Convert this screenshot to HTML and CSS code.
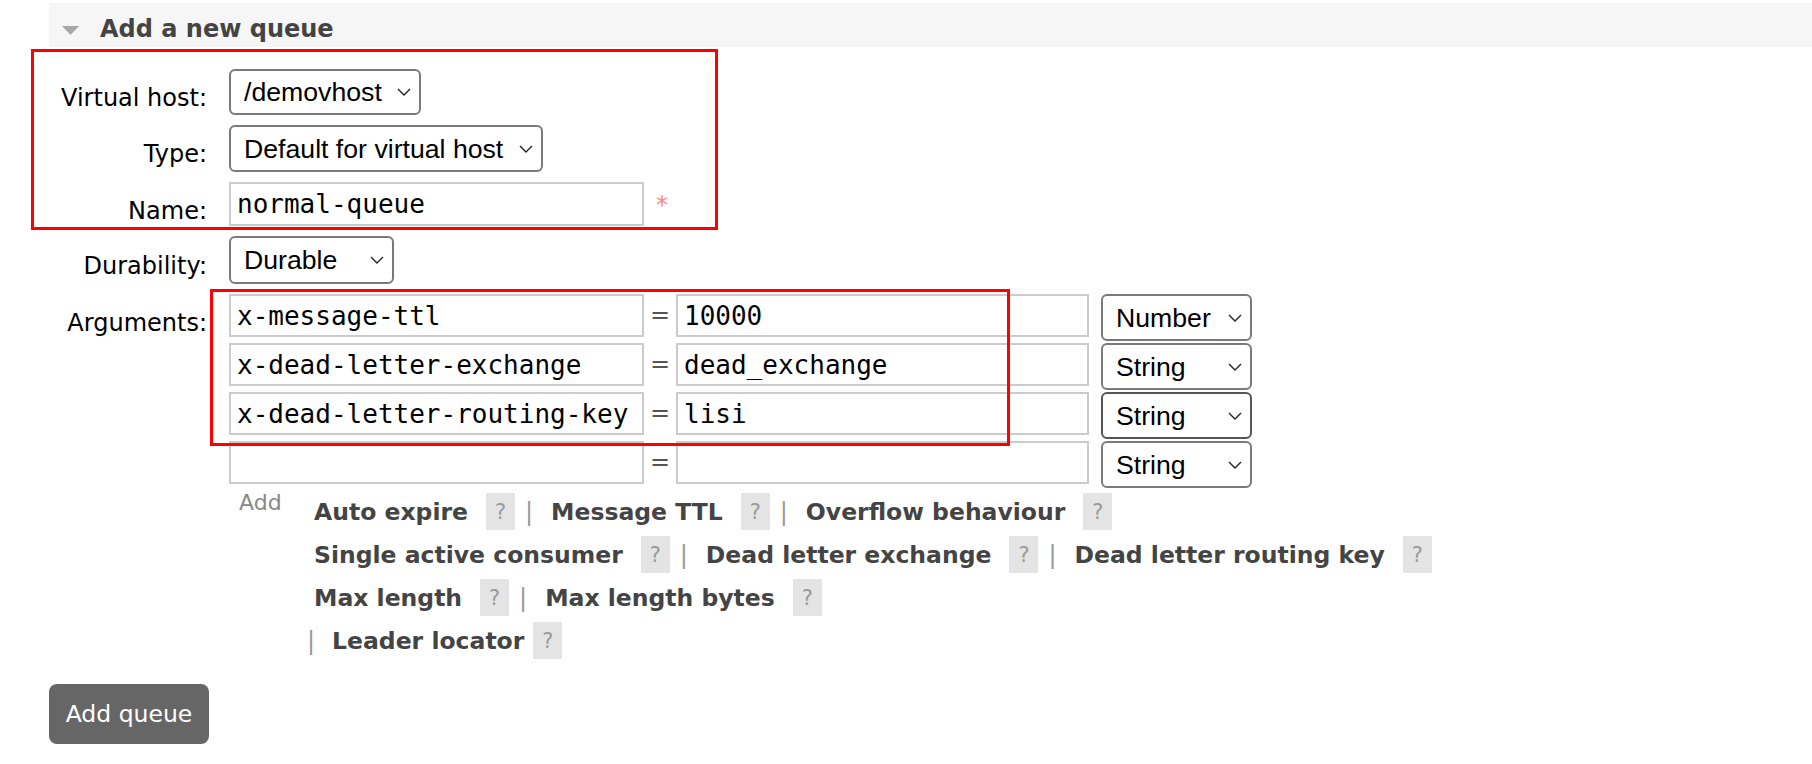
FILE: index.html
```html
<!DOCTYPE html>
<html lang="en">
<head>
<meta charset="utf-8">
<title>Add a new queue</title>
<link rel="stylesheet" href="styles.css">
</head>
<body>
<div class="page">
  <div class="section-head">
    <svg class="toggle" width="17" height="9" viewBox="0 0 17 9"><polygon points="0,0 17,0 8.5,9" fill="#a8a8a8"/></svg>
    <h2 class="section-title">Add a new queue</h2>
  </div>

  <form class="queue-form">
    <div class="field-grid">
      <label class="lbl">Virtual host:</label>
      <div class="ctl"><select class="sel sel-vhost"><option>/demovhost</option></select></div>

      <label class="lbl">Type:</label>
      <div class="ctl"><select class="sel sel-type"><option>Default for virtual host</option></select></div>

      <label class="lbl">Name:</label>
      <div class="ctl ctl-name"><input class="txt txt-name" type="text" value="normal-queue"><span class="req">*</span></div>

      <label class="lbl lbl-dur">Durability:</label>
      <div class="ctl"><select class="sel sel-dur"><option>Durable</option></select></div>

      <label class="lbl">Arguments:</label>
      <div class="ctl args">
        <div class="arg-list">
          <div class="arg-row"><input class="txt" type="text" value="x-message-ttl"><span class="eq">=</span><input class="txt val" type="text" value="10000"><select class="sel sel-argtype"><option>Number</option></select></div>
          <div class="arg-row"><input class="txt" type="text" value="x-dead-letter-exchange"><span class="eq">=</span><input class="txt val" type="text" value="dead_exchange"><select class="sel sel-argtype"><option>String</option></select></div>
          <div class="arg-row"><input class="txt" type="text" value="x-dead-letter-routing-key"><span class="eq">=</span><input class="txt val" type="text" value="lisi"><select class="sel sel-argtype sel-focus"><option>String</option></select></div>
          <div class="arg-row"><input class="txt" type="text" value=""><span class="eq">=</span><input class="txt val" type="text" value=""><select class="sel sel-argtype"><option>String</option></select></div>
        </div>
        <div class="arg-add">
          <span class="add-label">Add</span>
          <div class="arg-links">
            <div class="link-row">
              <span class="arg-link">Auto expire</span><span class="help">?</span><span class="sep">|</span>
              <span class="arg-link">Message TTL</span><span class="help">?</span><span class="sep">|</span>
              <span class="arg-link">Overflow behaviour</span><span class="help">?</span>
            </div>
            <div class="link-row">
              <span class="arg-link">Single active consumer</span><span class="help">?</span><span class="sep">|</span>
              <span class="arg-link">Dead letter exchange</span><span class="help">?</span><span class="sep">|</span>
              <span class="arg-link">Dead letter routing key</span><span class="help">?</span>
            </div>
            <div class="link-row">
              <span class="arg-link">Max length</span><span class="help">?</span><span class="sep">|</span>
              <span class="arg-link">Max length bytes</span><span class="help">?</span>
            </div>
            <div class="link-row link-row-last">
              <span class="sep">|</span><span class="arg-link">Leader locator</span><span class="help">?</span>
            </div>
          </div>
        </div>
      </div>
    </div>
    <button type="button" class="btn">Add queue</button>
  </form>

  <div class="annot annot-top"></div>
  <div class="annot annot-args"></div>
</div>
</body>
</html>
```

FILE: styles.css
```css
* { box-sizing: border-box; }

html, body {
  margin: 0;
  padding: 0;
  background: #fff;
}

body {
  font-family: "DejaVu Sans", Verdana, sans-serif;
  color: #000;
}

.page {
  position: relative;
  width: 1812px;
  min-height: 764px;
  padding-top: 3px;
}

/* section header */
.section-head {
  margin-left: 49px;
  height: 44px;
  background: #f6f6f6;
  display: flex;
  align-items: flex-start;
  padding: 12px 0 0 13px;
}

.toggle {
  display: block;
  margin-top: 11px;
}

.section-title {
  margin: 0 0 0 21px;
  font: bold 24px/28px "DejaVu Sans", Verdana, sans-serif;
  color: #444;
}

/* form */
.queue-form {
  margin-top: 22px;
}

.field-grid {
  display: grid;
  grid-template-columns: 207px max-content;
  column-gap: 22px;
  row-gap: 10px;
}

.lbl {
  text-align: right;
  font-size: 24px;
  line-height: 28px;
  padding-top: 15px;
  color: #000;
  white-space: nowrap;
}

.lbl-dur {
  padding-top: 16px;
}

.ctl {
  display: flex;
  align-items: flex-start;
}

.ctl-name {
  align-items: baseline;
}

.sel {
  -webkit-appearance: none;
  appearance: none;
  display: block;
  height: 47px;
  font: 26.67px "Liberation Sans", Arial, sans-serif;
  color: #000;
  border: 2px solid #7a7a7a;
  border-radius: 6px;
  background: #fff url("data:image/svg+xml;utf8,<svg xmlns='http://www.w3.org/2000/svg' width='14' height='8' viewBox='0 0 14 8'><path d='M1 1l6 6 6-6' fill='none' stroke='%23222' stroke-width='1.4'/></svg>") no-repeat right 8px center;
  padding: 0 30px 0 13px;
  margin: 0;
  outline: none;
}

.sel-vhost { width: 192px; height: 46px; }
.sel-type { width: 314px; }
.sel-dur { width: 165px; height: 48px; }
.sel-argtype { width: 151px; margin-left: 12px; }
.sel-focus { border-color: #555; }

.txt {
  display: block;
  width: 415px;
  height: 43px;
  margin: 0;
  padding: 0 6px;
  border: 2px solid #cbcbcb;
  border-radius: 0;
  background: #fff;
  color: #000;
  font: 26px "DejaVu Sans Mono", Menlo, monospace;
  outline: none;
}

.txt-name { height: 44px; }
.val { width: 413px; }

.req {
  margin-left: 12px;
  color: #ff8585;
  font-size: 24px;
}

/* arguments */
.args {
  flex-direction: column;
  gap: 2px;
}

.arg-list {
  display: flex;
  flex-direction: column;
  gap: 2px;
}

.arg-row {
  display: flex;
  align-items: flex-start;
  height: 47px;
}

.eq {
  width: 32px;
  text-align: center;
  line-height: 43px;
  font-size: 24px;
  color: #555;
}

.arg-add {
  display: flex;
  align-items: flex-start;
}

.add-label {
  width: 85px;
  padding-left: 10px;
  font-size: 22px;
  line-height: 26px;
  color: #888;
}

.arg-links {
  display: flex;
  flex-direction: column;
}

.link-row {
  display: flex;
  align-items: center;
  height: 43px;
  white-space: nowrap;
}

.arg-link {
  font: bold 23.5px "DejaVu Sans", Verdana, sans-serif;
  color: #444;
}

.help {
  display: inline-flex;
  align-items: center;
  justify-content: center;
  width: 29px;
  height: 37px;
  margin-left: 18px;
  background: #e4e4e4;
  color: #9a9a9a;
  font-size: 21px;
}

.sep {
  margin: 0 18px 0 10px;
  font-size: 24px;
  color: #999;
}

.link-row-last .sep {
  margin: 0 17px 0 -7px;
}

.link-row-last .help {
  margin-left: 9px;
}

/* button */
.btn {
  display: block;
  margin: 22px 0 0 49px;
  width: 160px;
  height: 60px;
  padding: 0;
  border: none;
  border-radius: 8px;
  background: #666;
  color: #fff;
  font: 23.5px "DejaVu Sans", Verdana, sans-serif;
  text-align: center;
}

/* red annotation frames drawn over the form */
.annot {
  position: absolute;
  border: 3px solid #f00;
  pointer-events: none;
}

.annot-top {
  left: 31px;
  top: 49px;
  width: 687px;
  height: 181px;
}

.annot-args {
  left: 210px;
  top: 289px;
  width: 800px;
  height: 157px;
}
```
